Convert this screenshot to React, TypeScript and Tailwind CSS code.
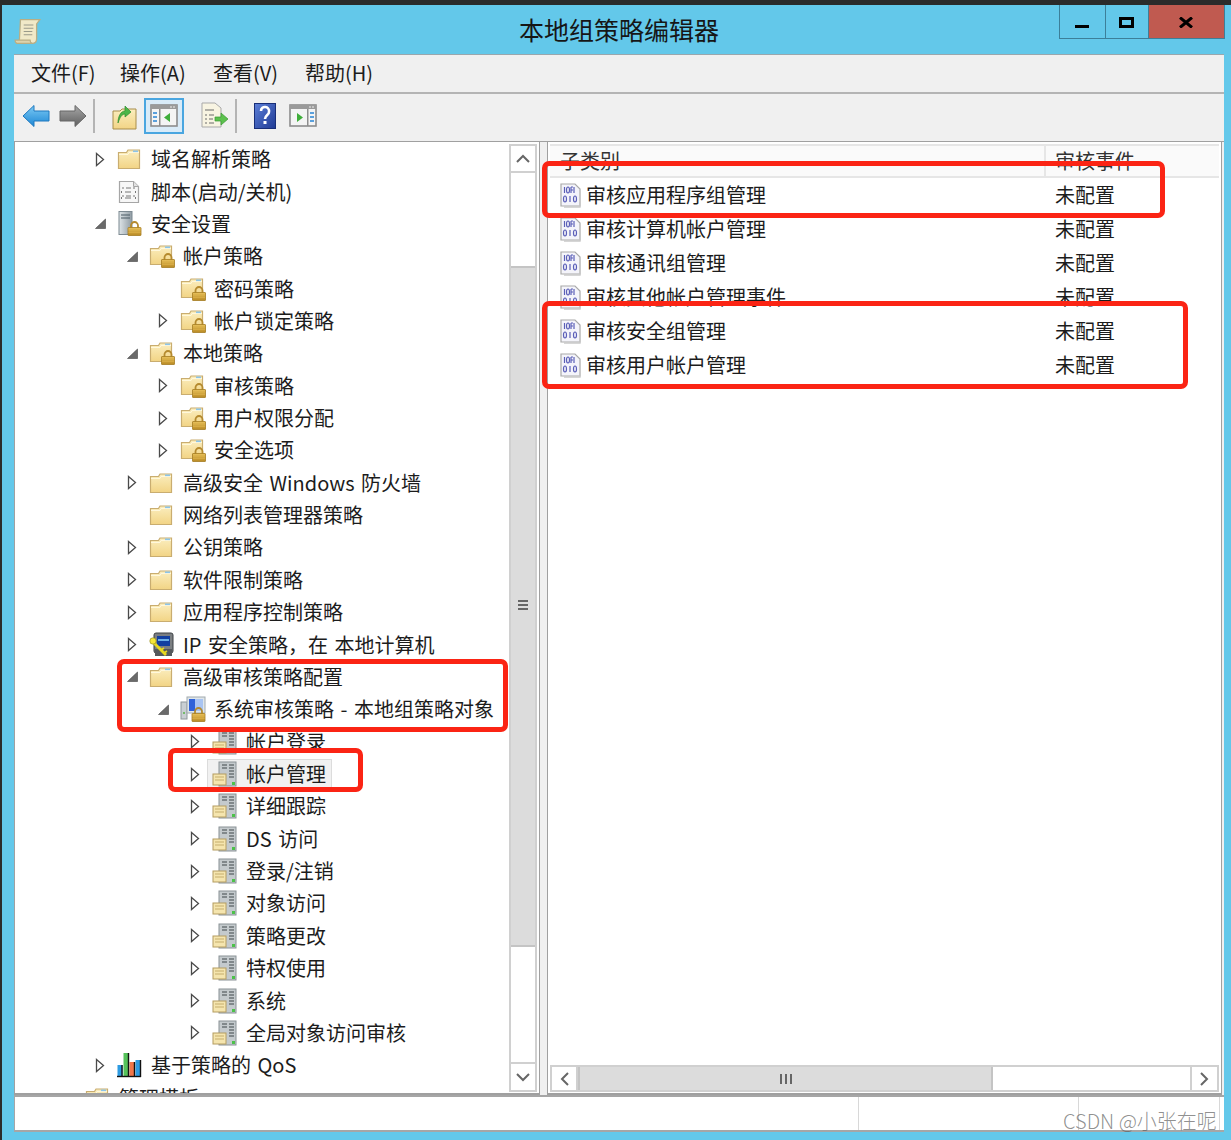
import React from "react";

const FONT = '"Noto Sans CJK SC","Noto Sans",sans-serif';

function Defs() {
  return (
    <svg className="w-0 h-0 shrink-0" aria-hidden="true">
      <defs>
        <linearGradient id="fold" x1="0" y1="0" x2="0" y2="1">
          <stop offset="0" stopColor="#fbeebf" />
          <stop offset="1" stopColor="#f2d485" />
        </linearGradient>
        <linearGradient id="gold" x1="0" y1="0" x2="0" y2="1">
          <stop offset="0" stopColor="#e9c25c" />
          <stop offset="1" stopColor="#b98a24" />
        </linearGradient>
        <linearGradient id="steel" x1="0" y1="0" x2="1" y2="0">
          <stop offset="0" stopColor="#dfe5e8" />
          <stop offset="1" stopColor="#8f9ba3" />
        </linearGradient>
        <linearGradient id="blueArrow" x1="0" y1="0" x2="0" y2="1">
          <stop offset="0" stopColor="#7ccaf4" />
          <stop offset="1" stopColor="#1c86d4" />
        </linearGradient>
        <linearGradient id="grayArrow" x1="0" y1="0" x2="0" y2="1">
          <stop offset="0" stopColor="#a8a8a8" />
          <stop offset="1" stopColor="#5e5e5e" />
        </linearGradient>
        <linearGradient id="helpBlue" x1="0" y1="0" x2="1" y2="1">
          <stop offset="0" stopColor="#5c7fd8" />
          <stop offset="1" stopColor="#1f3a94" />
        </linearGradient>
      </defs>
    </svg>
  );
}

function Lock({ x = 11, y = 11 }: { x?: number; y?: number }) {
  return (
    <g transform={`translate(${x} ${y})`}>
      <path d="M3.5 6V3.5a3.5 3.5 0 0 1 7 0V6" fill="none" stroke="#b58a2e" strokeWidth="1.8" />
      <rect x="0.5" y="5.5" width="13" height="8" rx="0.5" fill="url(#gold)" stroke="#a47c22" strokeWidth="0.8" />
      <path d="M1 8h12M1 10.5h12" stroke="#d9ae48" strokeWidth="0.8" />
    </g>
  );
}

function FolderShape() {
  return (
    <>
      <path d="M1.5 5.5h8l1.5-2.5h11.5v18.5h-21z" fill="url(#fold)" stroke="#c9ad70" strokeWidth="1.2" />
      <path d="M2 7.5h9l1-2h10" fill="none" stroke="#fff8dc" strokeWidth="1" />
      <rect x="16" y="3.5" width="5" height="1.6" fill="#8cc4e8" />
    </>
  );
}

function Folder() {
  return (
    <svg width="24" height="24" viewBox="0 0 24 24">
      <FolderShape />
    </svg>
  );
}

function FolderLock() {
  return (
    <svg width="26" height="26" viewBox="0 0 26 26">
      <FolderShape />
      <Lock x={12} y={11} />
    </svg>
  );
}

function ScriptDoc() {
  return (
    <svg width="24" height="24" viewBox="0 0 24 24">
      <path d="M2.5 1.5h14l5 5v16h-19z" fill="#f7f7f7" stroke="#a6a6a6" strokeWidth="1.2" />
      <path d="M16.5 1.5v5h5" fill="#e2e2e2" stroke="#a6a6a6" />
      <path d="M5 8h2M9 8h5M16 8h2M5 11l-1 1 1 1M18 11l1 1-1 1M5 16h2M9 16h5M16 16h2M5 19l-1-1 1-1M18 19l1-1-1-1M8 12h6M8 18h6" stroke="#777" strokeWidth="1" fill="none" />
    </svg>
  );
}

function ServerLock() {
  return (
    <svg width="26" height="26" viewBox="0 0 26 26">
      <rect x="2" y="0.5" width="13" height="23" fill="url(#steel)" stroke="#7d8a92" />
      <path d="M4 4h9M4 7h9" stroke="#4b5a64" strokeWidth="1.2" />
      <Lock x={10.5} y={11} />
    </svg>
  );
}

function AuditComputer() {
  return (
    <svg width="26" height="26" viewBox="0 0 26 26">
      <rect x="1" y="6" width="6" height="17" fill="#c9cfd3" stroke="#8e979c" />
      <circle cx="4" cy="17" r="1" fill="#59b54a" />
      <rect x="7" y="1" width="18" height="16" fill="#dfe6ea" stroke="#a2aaae" />
      <rect x="9" y="3" width="14" height="12" fill="#2f62d8" />
      <rect x="15" y="3" width="8" height="12" fill="#a9c4f2" />
      <Lock x={11.5} y={12} />
    </svg>
  );
}

function PolicyRack() {
  return (
    <svg width="26" height="26" viewBox="0 0 26 26">
      <rect x="7" y="1" width="17" height="24" fill="#c4cacd" stroke="#8a9296" />
      <path d="M10 4h5M17 4h5M10 7h5M17 7h5M17 10h5M17 13h5M17 16h5" stroke="#3e464a" strokeWidth="1.2" />
      <rect x="1" y="13" width="13" height="11" fill="#f5e5ae" stroke="#b49c60" />
      <path d="M3 16h9M3 19h9" stroke="#c5ad6d" />
      <rect x="20" y="21" width="3" height="3" fill="#4cc24a" />
    </svg>
  );
}

function IpIcon() {
  return (
    <svg width="26" height="26" viewBox="0 0 26 26">
      <rect x="5" y="1" width="19" height="20" rx="2" fill="#7b7f82" stroke="#3d4144" />
      <rect x="8" y="4" width="13" height="10" fill="#123fa0" />
      <path d="M9 8h11" stroke="#6bb0e8" strokeWidth="2" />
      <rect x="6" y="17" width="17" height="7" fill="#55595c" />
      <path d="M3 9l14 14" stroke="#e8d81e" strokeWidth="2.8" />
      <circle cx="4" cy="9" r="3.2" fill="#f5e63a" stroke="#87801a" strokeWidth="0.6" />
      <path d="M12 18l3-2M15 21l3-2" stroke="#e8d81e" strokeWidth="1.6" />
    </svg>
  );
}

function QosIcon() {
  return (
    <svg width="26" height="26" viewBox="0 0 26 26">
      <rect x="0.5" y="13" width="5" height="12" fill="#2d9be2" />
      <rect x="6.5" y="1" width="5" height="24" fill="#55c25a" />
      <rect x="12.5" y="10" width="5" height="15" fill="#f0764a" />
      <rect x="18.5" y="8" width="5" height="17" fill="#2d9be2" />
      <path d="M5 25V13M11.5 25V1M17.5 25V10M23.5 25V8" stroke="#111" strokeWidth="1.4" />
      <path d="M0 24.5h24" stroke="#111" strokeWidth="1.4" />
    </svg>
  );
}

function BinDoc() {
  return (
    <svg width="22" height="25" viewBox="0 0 22 25">
      <path d="M1 1h14l5 5v17H1z" fill="#f4f4fa" stroke="#a9a9a9" strokeWidth="1.2" />
      <path d="M20 8v16H4" fill="none" stroke="#c9c9c9" strokeWidth="1.4" />
      <g fill="none" stroke="#5b5fb8" strokeWidth="1.2">
        <path d="M4.5 4v6M14 4v6M11 4h2M11 7h2M11 4v6" />
        <ellipse cx="8" cy="7" rx="1.5" ry="3" />
        <ellipse cx="5" cy="16" rx="1.5" ry="3" />
        <path d="M10 13v6" />
        <ellipse cx="15" cy="16" rx="1.5" ry="3" />
      </g>
    </svg>
  );
}

function Arrow({ kind }: { kind?: "open" | "closed" }) {
  return (
    <span className="flex w-[16px] h-[16px] items-center justify-center shrink-0">
      {kind === "closed" && (
        <svg width="10" height="15" viewBox="0 0 10 15">
          <path d="M1.5 1.5l7 6-7 6z" fill="#fff" stroke="#4a4a4a" strokeWidth="1.3" />
        </svg>
      )}
      {kind === "open" && (
        <svg width="11" height="11" viewBox="0 0 11 11">
          <path d="M10.5 1v9.5H0.5z" fill="#6a6a6a" stroke="#444" strokeWidth="0.6" />
        </svg>
      )}
    </span>
  );
}

type Row = {
  l: -1 | 0 | 1 | 2 | 3;
  t: string;
  a?: "open" | "closed";
  i: "folder" | "lock" | "script" | "server" | "ip" | "audit" | "rack" | "qos";
  sel?: boolean;
};

const rows: Row[] = [
  { l: 0, t: "域名解析策略", a: "closed", i: "folder" },
  { l: 0, t: "脚本(启动/关机)", i: "script" },
  { l: 0, t: "安全设置", a: "open", i: "server" },
  { l: 1, t: "帐户策略", a: "open", i: "lock" },
  { l: 2, t: "密码策略", i: "lock" },
  { l: 2, t: "帐户锁定策略", a: "closed", i: "lock" },
  { l: 1, t: "本地策略", a: "open", i: "lock" },
  { l: 2, t: "审核策略", a: "closed", i: "lock" },
  { l: 2, t: "用户权限分配", a: "closed", i: "lock" },
  { l: 2, t: "安全选项", a: "closed", i: "lock" },
  { l: 1, t: "高级安全 Windows 防火墙", a: "closed", i: "folder" },
  { l: 1, t: "网络列表管理器策略", i: "folder" },
  { l: 1, t: "公钥策略", a: "closed", i: "folder" },
  { l: 1, t: "软件限制策略", a: "closed", i: "folder" },
  { l: 1, t: "应用程序控制策略", a: "closed", i: "folder" },
  { l: 1, t: "IP 安全策略，在 本地计算机", a: "closed", i: "ip" },
  { l: 1, t: "高级审核策略配置", a: "open", i: "folder" },
  { l: 2, t: "系统审核策略 - 本地组策略对象", a: "open", i: "audit" },
  { l: 3, t: "帐户登录", a: "closed", i: "rack" },
  { l: 3, t: "帐户管理", a: "closed", i: "rack", sel: true },
  { l: 3, t: "详细跟踪", a: "closed", i: "rack" },
  { l: 3, t: "DS 访问", a: "closed", i: "rack" },
  { l: 3, t: "登录/注销", a: "closed", i: "rack" },
  { l: 3, t: "对象访问", a: "closed", i: "rack" },
  { l: 3, t: "策略更改", a: "closed", i: "rack" },
  { l: 3, t: "特权使用", a: "closed", i: "rack" },
  { l: 3, t: "系统", a: "closed", i: "rack" },
  { l: 3, t: "全局对象访问审核", a: "closed", i: "rack" },
  { l: 0, t: "基于策略的 QoS", a: "closed", i: "qos" },
  { l: -1, t: "管理模板", i: "folder" },
];

function TreeIcon({ i }: { i: Row["i"] }) {
  const icon = {
    folder: <Folder />,
    lock: <FolderLock />,
    script: <ScriptDoc />,
    server: <ServerLock />,
    ip: <IpIcon />,
    audit: <AuditComputer />,
    rack: <PolicyRack />,
    qos: <QosIcon />,
  }[i];
  return <span className="flex w-[26px] h-[26px] items-center justify-start shrink-0">{icon}</span>;
}

const indent: Record<string, string> = {
  "-1": "pl-[45px]",
  "0": "pl-[77px]",
  "1": "pl-[109px]",
  "2": "pl-[140px]",
  "3": "pl-[172px]",
};

function TreeRow({ r }: { r: Row }) {
  return (
    <div className={`flex items-center h-[32.36px] shrink-0 ${indent[String(r.l)]}`}>
      <Arrow kind={r.a} />
      <div
        className={
          r.sel
            ? "flex items-center h-[31px] ml-[4px] pl-[4px] pr-[5px] bg-[#f1f1f1] border border-[#dcdcdc]"
            : "flex items-center h-[31px] ml-[9px]"
        }
      >
        <TreeIcon i={r.i} />
        <span className="ml-[8px] text-[20px] leading-none whitespace-nowrap text-[#1c1c1c] [word-spacing:2px]">{r.t}</span>
      </div>
    </div>
  );
}

function VScroll() {
  return (
    <div className="flex flex-col w-[28px] mt-[2px] mb-[1px] mr-[2px] shrink-0 border-2 border-[#d0d0d0] bg-white">
      <div className="h-[27px] flex items-center justify-center border-b-2 border-[#d0d0d0]">
        <svg width="14" height="9" viewBox="0 0 14 9">
          <path d="M1 8l6-6 6 6" fill="none" stroke="#666" strokeWidth="2" />
        </svg>
      </div>
      <div className="h-[93px]" />
      <div className="h-[681px] pb-[3px] bg-[#dcdcdc] border-y-2 border-[#c4c4c4] flex items-center justify-center">
        <div className="w-[10px] h-[10px] border-y-2 border-[#666] flex items-center">
          <div className="w-full h-[2px] bg-[#666]" />
        </div>
      </div>
      <div className="flex-1" />
      <div className="h-[28px] flex items-center justify-center border-t-2 border-[#d0d0d0]">
        <svg width="14" height="9" viewBox="0 0 14 9">
          <path d="M1 1l6 6 6-6" fill="none" stroke="#666" strokeWidth="2" />
        </svg>
      </div>
    </div>
  );
}

function HScroll() {
  return (
    <div className="flex h-[27px] mx-[2px] mb-[1px] shrink-0 border-2 border-[#d0d0d0] bg-white">
      <div className="w-[26px] flex items-center justify-center border-r-2 border-[#d0d0d0]">
        <svg width="9" height="14" viewBox="0 0 9 14">
          <path d="M8 1L2 7l6 6" fill="none" stroke="#666" strokeWidth="2" />
        </svg>
      </div>
      <div className="w-[415px] bg-[#dcdcdc] border-x-2 border-[#c4c4c4] flex items-center justify-center">
        <div className="w-[12px] h-[10px] border-x-2 border-[#666] flex justify-center">
          <div className="h-full w-[2px] bg-[#666]" />
        </div>
      </div>
      <div className="flex-1" />
      <div className="w-[27px] flex items-center justify-center border-l-2 border-[#d0d0d0]">
        <svg width="9" height="14" viewBox="0 0 9 14">
          <path d="M1 1l6 6-6 6" fill="none" stroke="#666" strokeWidth="2" />
        </svg>
      </div>
    </div>
  );
}

const listRows = [
  "审核应用程序组管理",
  "审核计算机帐户管理",
  "审核通讯组管理",
  "审核其他帐户管理事件",
  "审核安全组管理",
  "审核用户帐户管理",
];

function WindowPane({ right }: { right?: boolean }) {
  return (
    <svg width="28" height="23" viewBox="0 0 28 23">
      <rect x="1" y="1" width="26" height="21" fill="#f4f4f4" stroke="#8d8d8d" strokeWidth="1.6" />
      <rect x="1" y="1" width="26" height="4" fill="#9a9a9a" />
      <path d="M20 3h2M23 3h2" stroke="#eee" />
      {right ? (
        <>
          <rect x="18" y="5" width="1.5" height="17" fill="#8d8d8d" />
          <path d="M21 9h4M21 13h4M21 17h4" stroke="#5aa0dc" strokeWidth="2" />
          <path d="M8 9l6 4.5-6 4.5z" fill="#3fae3a" />
        </>
      ) : (
        <>
          <rect x="9" y="5" width="1.5" height="17" fill="#8d8d8d" />
          <path d="M3 9h4M3 13h4M3 17h4" stroke="#5aa0dc" strokeWidth="2" />
          <path d="M20 9l-6 4.5 6 4.5z" fill="#3fae3a" />
        </>
      )}
    </svg>
  );
}

function Toolbar() {
  const sep = <div className="w-[2px] h-[34px] bg-[#b4b4b4] shrink-0" />;
  return (
    <div className="flex items-center h-[48px] pb-[4px] pl-[8px] bg-[#f0f0f0] border-b border-[#a0a0a0] shrink-0">
      <svg width="28" height="24" viewBox="0 0 28 24" className="shrink-0">
        <path d="M1 12L12 1.5V7h15v10H12v5.5z" fill="url(#blueArrow)" stroke="#1f78bf" strokeWidth="1" />
      </svg>
      <svg width="28" height="24" viewBox="0 0 28 24" className="ml-[9px] shrink-0">
        <path d="M27 12L16 1.5V7H1v10h15v5.5z" fill="url(#grayArrow)" stroke="#666" strokeWidth="1" />
      </svg>
      <div className="ml-[6px]">{sep}</div>
      <svg width="25" height="30" viewBox="0 -5 25 30" className="ml-[17px] shrink-0">
        <path d="M1 5h7l2-2h14v20H1z" fill="url(#fold)" stroke="#a88d4a" />
        <path d="M6 17c0-7 3-12 7-12V0l6 6-6 5V8c-3 0-5 3-7 9z" fill="#4cb648" stroke="#2d8d2c" strokeWidth="0.7" />
      </svg>
      <div className="ml-[7px] w-[40px] h-[36px] bg-[#d9ebf8] border-2 border-[#4aa6e0] flex items-center justify-center shrink-0">
        <WindowPane />
      </div>
      <svg width="28" height="27" viewBox="0 0 28 27" className="ml-[17px] shrink-0">
        <path d="M1 1h13l6 5v19H1z" fill="#f8f4e2" stroke="#a9a9a9" />
        <path d="M4 8h9M4 13h2M8 13h5M4 17h2M8 17h4M4 21h2M8 21h5" stroke="#6a6a6a" />
        <path d="M14 15h6v-4l7 6-7 6v-4h-6z" fill="#5cc14e" stroke="#3b9a34" strokeWidth="0.7" />
      </svg>
      <div className="ml-[6px]">{sep}</div>
      <svg width="22" height="26" viewBox="0 0 22 26" className="ml-[17px] shrink-0">
        <rect x="0.5" y="0.5" width="21" height="25" fill="url(#helpBlue)" stroke="#182e78" />
        <path d="M7 8c0-6 9-5 8 1 0 3-4 3-4 7" fill="none" stroke="#fff" strokeWidth="2.6" />
        <rect x="9.5" y="18" width="3" height="3" fill="#fff" />
      </svg>
      <div className="ml-[13px] shrink-0 flex">
        <WindowPane right />
      </div>
    </div>
  );
}

function Callout({ cls }: { cls: string }) {
  return <div className={`absolute border-[5px] border-[#fb2414] rounded-[7px] pointer-events-none ${cls}`} />;
}

export default function App() {
  return (
    <div
      className="relative w-[1231px] h-[1140px] overflow-hidden bg-[#63c8ea] border-t-[5px] border-l-2 border-[#2b2b2b] flex flex-col"
      style={{ fontFamily: FONT }}
    >
      <Defs />
      {/* Title bar */}
      <div className="flex h-[49px] shrink-0">
        <div className="w-[177px] shrink-0 pl-[12px] pt-[12px]">
          <svg width="28" height="29" viewBox="0 0 26 26">
            <path d="M6 2h18l-3 4v14c0 3-2 4-4 4H2c2 0 3-1 3-3z" fill="#f1e9c8" stroke="#b9ae84" strokeWidth="1.2" />
            <path d="M9 7h9M9 10h9M9 13h8M9 16h8" stroke="#9a9a8a" />
            <path d="M1 21h14c0 2 1 3 2 3H3c-1 0-2-1-2-3z" fill="#ddd3ad" stroke="#b9ae84" />
          </svg>
        </div>
        <div className="flex-1 flex items-center justify-center text-[25px] leading-none text-[#161616]">
          本地组策略编辑器
        </div>
        <div className="flex items-start pr-[6px] shrink-0">
          <div className="w-[46px] h-[34px] border-l border-b border-[#3c7f99] flex items-end justify-center pb-[10px] pr-[2px]">
            <div className="w-[14px] h-[3px] bg-black" />
          </div>
          <div className="w-[43px] h-[34px] border-l border-b border-[#3c7f99] flex items-start justify-center pt-[12px] pr-[2px]">
            <div className="w-[15px] h-[11px] border-[3px] border-black" />
          </div>
          <div className="w-[77px] h-[34px] bg-[#c05a50] border-l border-b border-r border-[#3c7f99] flex items-start justify-center pt-[12px] pr-[2px]">
            <svg width="14" height="11" viewBox="0 0 14 11">
              <path d="M1 0.5l12 10M13 0.5l-12 10" stroke="#000" strokeWidth="3" />
            </svg>
          </div>
        </div>
      </div>

      {/* Window body */}
      <div className="flex flex-col ml-[12px] mr-[7px] bg-[#f0f0f0] border-t border-[#9aa7ad] shrink-0">
        <div className="flex items-center h-[39px] pb-[1px] pl-[17px] border-b-2 border-[#b4b4b4] text-[20px] leading-none text-[#1c1c1c] shrink-0">
          <span className="w-[89px]">文件(F)</span>
          <span className="w-[93px]">操作(A)</span>
          <span className="w-[92px]">查看(V)</span>
          <span>帮助(H)</span>
        </div>
        <Toolbar />
        <div className="flex h-[953px] pr-[2px] shrink-0">
          <div className="flex w-[526px] border-x border-b-2 border-[#a0a0a0] bg-white shrink-0">
            <div className="flex-1 flex flex-col overflow-hidden min-w-0 pt-[1px]">
              {rows.map((r, i) => (
                <TreeRow key={i} r={r} />
              ))}
            </div>
            <VScroll />
          </div>
          <div className="w-[7px] shrink-0" />
          <div className="flex flex-col flex-1 border-x border-b-2 border-[#a0a0a0] bg-white min-w-0">
            <div className="flex-1 flex flex-col pt-[2px] min-h-0">
              <div className="flex h-[34px] mx-[2px] bg-[#fafafa] border-y-2 border-[#e6e6e6] shrink-0 text-[20px] leading-none text-[#333]">
                <div className="w-[496px] pl-[10px] flex items-center border-r-2 border-[#e6e6e6]">子类别</div>
                <div className="pl-[9px] flex items-center">审核事件</div>
              </div>
              {listRows.map((t) => (
                <div key={t} className="flex items-center h-[34px] pl-[12px] shrink-0 text-[20px] leading-none text-[#1c1c1c]">
                  <span className="w-[26px] shrink-0 flex items-center">
                    <BinDoc />
                  </span>
                  <span className="w-[469px] whitespace-nowrap">{t}</span>
                  <span>未配置</span>
                </div>
              ))}
            </div>
            <HScroll />
          </div>
        </div>
      </div>

      {/* Status bar */}
      <div className="flex h-[37px] ml-[12px] mr-[7px] bg-white border-t-2 border-b-2 border-l border-[#a6a6a6] shrink-0">
        <div className="w-[844px] border-r border-[#d8d8d8]" />
        <div className="w-[220px] border-r border-[#d8d8d8]" />
        <div className="w-[141px] border-r border-[#d8d8d8]" />
      </div>

      {/* Annotations laid over the screenshot */}
      <Callout cls="left-[540px] top-[156px] w-[623px] h-[57px]" />
      <Callout cls="left-[540px] top-[296px] w-[646px] h-[88px]" />
      <Callout cls="left-[115px] top-[654px] w-[391px] h-[73px]" />
      <Callout cls="left-[166px] top-[743px] w-[195px] h-[44px]" />
      <div className="absolute left-[1061px] top-[1105px] text-[20px] leading-[22px] font-light whitespace-nowrap text-[#5f5f5f]/70">
        CSDN @小张在呢
      </div>
    </div>
  );
}
